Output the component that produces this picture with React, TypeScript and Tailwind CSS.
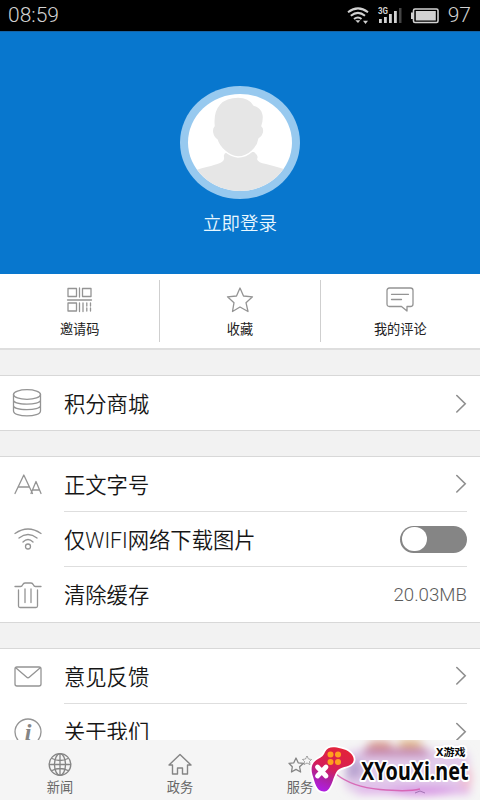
import type { ReactNode } from "react";

const line = {
  fill: "none",
  stroke: "#949494",
  strokeWidth: 1.3,
  strokeLinecap: "round" as const,
  strokeLinejoin: "round" as const,
};

function StatusBar() {
  return (
    <header className="flex h-[31px] shrink-0 items-center justify-between bg-black pl-2 pr-[9px] font-['Roboto'] text-[21px] font-light text-[#d2d2d2]">
      <span className="pt-px">08:59</span>
      <div className="flex items-center">
        <svg width="124" height="31" viewBox="347 0 124 31" className="-mr-[23px]">
          <g fill="none" stroke="#d2d2d2" strokeWidth="2">
            <path d="M348 12.2 Q358 4.5 368 12.2" />
            <path d="M350.8 15.7 Q358 10 365 15.7" />
            <path d="M354 19 Q358 16 361.5 19" />
          </g>
          <path d="M355.3 20.3h5L358 23z" fill="#d2d2d2" />
          <path d="M363 20.8h5L365.500 24z" fill="#d2d2d2" />
          <text x="378" y="14" fill="#d2d2d2" fontSize="8.5" fontWeight="700" textLength="10" lengthAdjust="spacingAndGlyphs">3G</text>
          <path d="M379 19h2.800v4H379zM384 17h2.800v6H384zM389 14h2.800v9H389zM394 11h2.800v12H394z" fill="#d2d2d2" />
          <path d="M399 8h2.500v15H399z" fill="#454545" />
          <rect x="413.500" y="9" width="24.500" height="13.500" rx="1.500" fill="none" stroke="#d2d2d2" strokeWidth="1.600" />
          <path d="M411 12.500h2v6.500h-2zM415.800 11h20v9.500h-20z" fill="#d2d2d2" />
        </svg>
        <span className="pt-px">97</span>
      </div>
    </header>
  );
}

function Avatar() {
  return (
    <svg width="120" height="114" viewBox="0 0 120 114">
      <defs>
        <clipPath id="face">
          <ellipse cx="60" cy="56.500" rx="52" ry="48.500" />
        </clipPath>
      </defs>
      <ellipse cx="60" cy="56.500" rx="60" ry="56.500" fill="#97c9ef" />
      <ellipse cx="60" cy="56.500" rx="52" ry="48.500" fill="#fff" />
      <g clipPath="url(#face)" fill="#e6e6e6">
        <path d="M5 108V88C15 84 23 82 31 80C40 77 45 76 44 71Q43 68 47 66L74 66Q79 70 77 73Q78 77 86 78C96 81 106 83 112 86V108Z" />
        <path d="M34 40C32 20 43 11 58 11C66 11 71 14 74 19C84 22 85 31 82 40C86 44 83 51 79 53C78 61 69 71 58 71C48 70 39 61 37 54C32 51 31 43 34 40Z" stroke="#fff" strokeWidth="1.500" />
      </g>
    </svg>
  );
}

function QuickLink({ label, children }: { label: string; children: ReactNode }) {
  return (
    <div className="flex h-[75px] flex-1 flex-col items-center pt-3">
      <svg width="28" height="28" viewBox="0 0 28 28" {...line}>{children}</svg>
      <span className="mt-[5px] text-[13.200px] leading-[21px] text-[#222]">{label}</span>
    </div>
  );
}

function Chevron() {
  return (
    <svg width="12" height="20" viewBox="0 0 12 20" fill="none" stroke="#8e8e8e" strokeWidth="1.600" strokeLinecap="round">
      <path d="M1.800 1.500L10.200 9.700L1.800 18" />
    </svg>
  );
}

function Row({ icon, label, children }: { icon: ReactNode; label: ReactNode; children: ReactNode }) {
  return (
    <div className="group flex h-[55px] items-stretch pl-[12px]">
      <svg width="32" height="32" viewBox="0 0 32 32" {...line} className="mr-5 mt-3 shrink-0">{icon}</svg>
      <div className="mr-[13px] flex flex-1 items-center justify-between border-b border-[#dedede] group-last:border-b-0">
        <span className="pt-[3px] text-[21.300px] font-[350] leading-8 text-[#161616]">{label}</span>
        {children}
      </div>
    </div>
  );
}

function Tab({ label, children }: { label: string; children?: ReactNode }) {
  return (
    <div className="flex w-[120px] flex-col items-center pt-3">
      <svg width="26" height="26" viewBox="0 0 26 26" {...line} stroke="#858585">{children}</svg>
      <span className="text-[13.200px] leading-5 text-[#666]">{label}</span>
    </div>
  );
}

const star = "M14 2L17.500 10L26.500 10.800L20 16.700L22 25.500L14 21L6.500 25.500L8 16.700L1.500 10.800L10.500 10Z";

function Watermark() {
  return (
    <svg className="absolute left-[300px] top-[732px] h-[68px] w-[180px]" viewBox="300 732 180 68">
      <defs>
        <linearGradient id="pad" x1="0.700" y1="0" x2="0.300" y2="1">
          <stop offset="0" stopColor="#e32338" />
          <stop offset="0.500" stopColor="#d51e58" />
          <stop offset="0.750" stopColor="#ad22a4" />
          <stop offset="1" stopColor="#b01ee2" />
        </linearGradient>
        <filter id="soft" x="-30%" y="-60%" width="160%" height="220%"><feGaussianBlur stdDeviation="4" /></filter>
        <clipPath id="band"><rect x="300" y="740" width="180" height="60" /></clipPath>
      </defs>
      <g clipPath="url(#band)">
        <g filter="url(#soft)">
          <rect x="345" y="750" width="124" height="42" rx="9" fill="#e2cbea" />
          <path d="M363 748H428V757H363Z" fill="#c58ab4" />
          <ellipse cx="380" cy="745" rx="13" ry="4" fill="#d99a8a" />
          <ellipse cx="410" cy="744" rx="13" ry="4" fill="#dfb07e" />
          <path d="M350 760H362V778H345Z" fill="#b8a3d0" />
          <path d="M362 787H470V794H355Z" fill="#dfaeea" />
          <ellipse cx="421" cy="791" rx="32" ry="4" fill="#d488e3" />
          <ellipse cx="466" cy="778" rx="6" ry="12" fill="#f0bfd2" />
        </g>
      </g>
      <path d="M336 774Q352 787 380 789.500T420 789" fill="none" stroke="#d65aae" strokeWidth="1.500" opacity=".85" />
      <path d="M415 793l5-2 5 2" fill="none" stroke="#a374b4" strokeWidth="1" />
      <path d="M325 752C328 746 334 747 341 748.500C349 750 355 756 353.500 761C352 767 343 766 338 770C333 775 332 791 324.500 791.500C316 792 315 782 312.500 775C310 766 313 762 318 759C322 757 324 755 325 752Z" fill="url(#pad)" stroke="#fff" strokeWidth="3.500" paintOrder="stroke" />
      <path d="M317.500 767L326 776M326 767L317.500 776" stroke="#fff" strokeWidth="4.800" strokeLinecap="round" />
      <g fill="#ffa01e"><circle cx="330.500" cy="754.500" r="3" /><circle cx="338" cy="754.500" r="3" /><circle cx="330.500" cy="762" r="3" /><circle cx="338" cy="762" r="3" /></g>
      <g fill="#080808" stroke="#fff" strokeWidth="4" strokeLinejoin="round" paintOrder="stroke" fontWeight="700">
        <text x="436" y="756" fontSize="10.200" textLength="29.500" lengthAdjust="spacingAndGlyphs" style={{ fontFamily: '"Noto Sans", "Noto Sans CJK SC", sans-serif' }}>X游戏</text>
        <text x="361" y="780" fontSize="24.500" textLength="107.500" lengthAdjust="spacingAndGlyphs" style={{ fontFamily: '"Noto Sans", sans-serif' }}>XYouXi.net</text>
      </g>
    </svg>
  );
}

export default function App() {
  return (
    <div className="relative flex h-[800px] w-[480px] flex-col overflow-hidden bg-[#f2f2f2] font-['Roboto','Noto_Sans_CJK_SC',sans-serif]">
      <StatusBar />
      <section className="flex h-[243px] shrink-0 flex-col items-center border-t border-[#1563a6] bg-[#0877ce] pt-[54px]">
        <Avatar />
        <span className="mt-[10px] text-[18.500px] font-[350] leading-7 text-[#e9f8ff]">立即登录</span>
      </section>
      <main className="flex min-h-0 flex-1 flex-col gap-[25px] overflow-hidden">
        <section className="flex h-[76px] shrink-0 items-start border-b-2 border-[#dedede] bg-white">
          <QuickLink label="邀请码">
            <path d="M2 2.500h8.500v8H2zM16.500 2.500H25v8h-8.500zM2 17h8.500v8H2zM13.500 2v9M1.500 14H25.500M13.500 17v8.500M17 17v8.500" />
            <path d="M20.800 17v8.500M24.500 17v8.500" strokeDasharray="3 2" />
          </QuickLink>
          <div className="mt-1.5 h-[62px] w-px bg-[#cfcfcf]" />
          <QuickLink label="收藏"><path d={star} /></QuickLink>
          <div className="mt-1.5 h-[62px] w-px bg-[#cfcfcf]" />
          <QuickLink label="我的评论">
            <path d="M3.500 2h21Q27 2 27 4.500V18Q27 20.500 24.500 20.500H21V25L15.500 20.500H3.500Q1 20.500 1 18V4.500Q1 2 3.500 2zM5.500 8.300H22.500M5.500 13.500H15.500" />
          </QuickLink>
        </section>

        <section className="h-[56px] shrink-0 border-y border-[#d8d8d8] bg-white">
          <Row label="积分商城" icon={<><ellipse cx="15" cy="6.500" rx="13.500" ry="4.800" /><path d="M1.500 6.500V23C1.500 29.500 28.500 29.500 28.500 23V6.500M1.500 12C1.500 17.500 28.500 17.500 28.500 12M1.500 17.500C1.500 23 28.500 23 28.500 17.500" /></>}><Chevron /></Row>
        </section>

        <section className="h-[167px] shrink-0 border-y border-[#d8d8d8] bg-white">
          <Row label="正文字号" icon={<path d="M3 24.500L11.800 6L20.500 24.500M6 18H17.500M19 24.500L24 12.500L29 24.500M20.500 21H27.500" />}><Chevron /></Row>
          <Row label={<>仅<span className="font-light">WIFI</span>网络下载图片</>} icon={<><path d="M3 9.500Q16 .5 29 9.500M7 14Q16 7 25 14M11 18Q16 13 21 18" /><circle cx="16" cy="22.500" r="2.500" /></>}>
            <span className="flex h-[27px] w-[67px] items-center rounded-full bg-[#858585] px-[2px]"><span className="h-[24px] w-[25px] rounded-full bg-white" /></span>
          </Row>
          <Row label="清除缓存" icon={<path d="M3 7.500H8.500Q10 7.500 10.500 6Q11.500 4 13 4H19Q20.500 4 21.500 6Q22 7.500 23.500 7.500H29M6.500 11V27Q6.500 28.500 8 28.500H24Q25.500 28.500 25.500 27V11M13 10V23.500M19 10V23.500" />}>
            <span className="pt-0.5 text-[18.700px] font-light text-[#5c5c5c]">20.03MB</span>
          </Row>
        </section>

        <section className="shrink-0 border-t border-[#d8d8d8] bg-white">
          <Row label="意见反馈" icon={<><rect x="3" y="6" width="26" height="19" rx="2" /><path d="M4 7L14.500 16Q16 17.500 17.500 16L28 7" /></>}><Chevron /></Row>
          <Row label="关于我们" icon={<><circle cx="16" cy="16" r="13" /><text x="16" y="23.500" fill="#858585" stroke="none" fontSize="24" fontStyle="italic" fontWeight="700" textAnchor="middle" style={{ fontFamily: '"Liberation Serif", serif' }}>i</text></>}><Chevron /></Row>
        </section>
      </main>

      <nav className="flex h-[60px] shrink-0 bg-[#f5f5f5]">
        <Tab label="新闻">
          <circle cx="13" cy="12.500" r="10.800" /><ellipse cx="13" cy="12.500" rx="5.500" ry="10.800" /><path d="M13 2V23M2.500 12.500H23.500M5 6.500Q13 10.500 21 6.500M5 18.500Q13 14.500 21 18.500" />
        </Tab>
        <Tab label="政务">
          <path d="M2 13L13 2.500L24 13H20.500V22H15.500V16H10.500V22H5.500V13Z" strokeWidth="1.400" />
        </Tab>
        <Tab label="服务">
          <path d="M9 6L11.200 10.800L16.500 11.300L12.600 14.800L13.600 20L9 17.400L4.500 20L5.300 14.800L2 11.300L6.800 10.800Z" />
          <path d="M20 4l1.500 3 3 .5-2 2 .5 3-3-1.500-3 1.500.5-3-2-2 3-.5z" strokeWidth=".8" strokeDasharray="2 1" />
        </Tab>
        <Tab label="" />
      </nav>
      <Watermark />
    </div>
  );
}
